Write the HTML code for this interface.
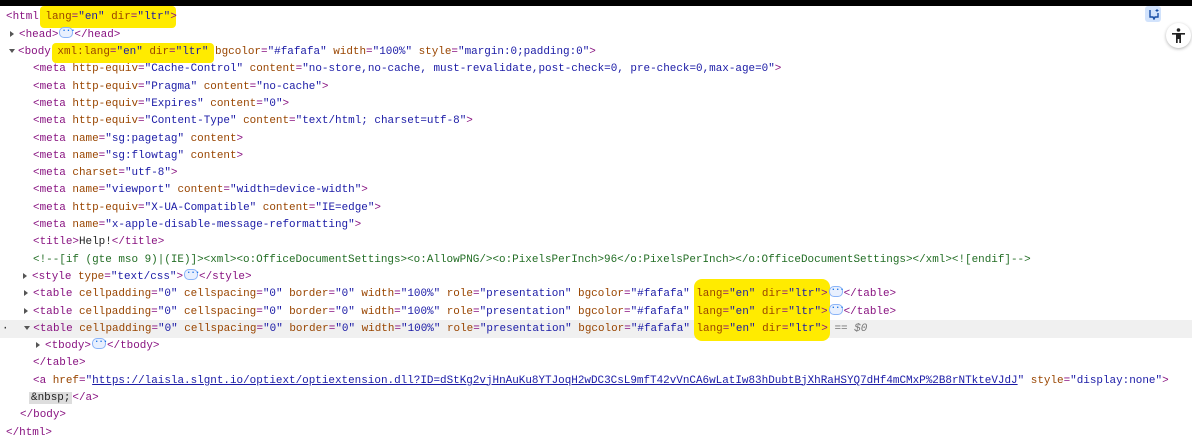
<!DOCTYPE html>
<html><head><style>
body{margin:0;width:1192px;height:438px;background:#fff;overflow:hidden;position:relative;font-family:"Liberation Mono",monospace;font-size:10.95px;}
.top{position:absolute;left:0;top:0;width:1192px;height:6px;background:#000;}
.l{position:absolute;left:0;height:17.3px;line-height:17.3px;white-space:pre;color:#222;}
.t{color:#881280}.n{color:#994500}.v{color:#1a1aa6}.c{color:#236e25}
.u{color:#1a1aa6;text-decoration:underline}
.hl{position:absolute;background:#ffeb00;border-radius:4px;}
.tri{display:inline-block;width:0;height:0;border-left:4px solid #555;border-top:3.5px solid transparent;border-bottom:3.5px solid transparent;margin:0 5px 0 2px;vertical-align:0px}
.trd{display:inline-block;width:0;height:0;border-top:4px solid #555;border-left:3.5px solid transparent;border-right:3.5px solid transparent;margin:0 3px 0 1px;vertical-align:1px}
.e{display:inline-block;width:12px;height:9px;border:1px solid #8ab4f8;border-radius:5px;background:#e8f0fe;vertical-align:-1px;margin:0 1px;position:relative}
.e:after{content:"···";position:absolute;left:1px;top:-5px;font-size:9px;color:#1a73e8;letter-spacing:-1px;font-weight:bold}
.sel{position:absolute;left:0;top:320px;width:1192px;height:18px;background:#f0f0f0}
</style></head><body>
<div class="top"></div>
<div class="sel"></div>
<div class="hl" style="left:40px;top:6px;width:136px;height:22px"></div>
<div class="hl" style="left:52px;top:43px;width:162px;height:20px"></div>
<div class="hl" style="left:694px;top:279px;width:136px;height:62px;border-radius:8px"></div>
<div style="position:absolute;left:1145px;top:6px;width:16px;height:16px;background:#d2e3fc;border-radius:3px"></div>
<svg style="position:absolute;left:1148px;top:8px" width="12" height="12"><path d="M2 2v7h3l1 2 1-2h3V5" fill="none" stroke="#174ea6" stroke-width="1.4"/><path d="M9 1v3M7.5 2.5h3" stroke="#174ea6" stroke-width="1"/></svg>
<div style="position:absolute;left:1166px;top:23px;width:25px;height:25px;border-radius:50%;background:#fff;box-shadow:0 1px 3px rgba(0,0,0,.3)"></div>
<svg style="position:absolute;left:1170px;top:27px" width="17" height="17"><circle cx="8.5" cy="3" r="1.8" fill="#222"/><path d="M2 6h13v1.6h-4V16H9.3v-4H7.7v4H6V7.6H2z" fill="#222"/></svg>

<div class="l" style="top:9.4px;padding-left:6px"><span class="t">&lt;html</span> <span class="n">lang</span><span class="t">=</span><span class="v">"en"</span> <span class="n">dir</span><span class="t">=</span><span class="v">"ltr"</span><span class="t">&gt;</span></div>
<div class="l" style="top:26.7px;padding-left:8px"><span class="tri"></span><span class="t">&lt;head&gt;</span><span class="e"></span><span class="t">&lt;/head&gt;</span></div>
<div class="l" style="top:44px;padding-left:8px"><span class="trd"></span><span class="t">&lt;body</span> <span class="n">xml:lang</span><span class="t">=</span><span class="v">"en"</span> <span class="n">dir</span><span class="t">=</span><span class="v">"ltr"</span> <span class="n">bgcolor</span><span class="t">=</span><span class="v">"#fafafa"</span> <span class="n">width</span><span class="t">=</span><span class="v">"100%"</span> <span class="n">style</span><span class="t">=</span><span class="v">"margin:0;padding:0"</span><span class="t">&gt;</span></div>
<div class="l" style="top:61.3px;padding-left:33px"><span class="t">&lt;meta</span> <span class="n">http-equiv</span><span class="t">=</span><span class="v">"Cache-Control"</span> <span class="n">content</span><span class="t">=</span><span class="v">"no-store,no-cache, must-revalidate,post-check=0, pre-check=0,max-age=0"</span><span class="t">&gt;</span></div>
<div class="l" style="top:78.6px;padding-left:33px"><span class="t">&lt;meta</span> <span class="n">http-equiv</span><span class="t">=</span><span class="v">"Pragma"</span> <span class="n">content</span><span class="t">=</span><span class="v">"no-cache"</span><span class="t">&gt;</span></div>
<div class="l" style="top:95.9px;padding-left:33px"><span class="t">&lt;meta</span> <span class="n">http-equiv</span><span class="t">=</span><span class="v">"Expires"</span> <span class="n">content</span><span class="t">=</span><span class="v">"0"</span><span class="t">&gt;</span></div>
<div class="l" style="top:113.2px;padding-left:33px"><span class="t">&lt;meta</span> <span class="n">http-equiv</span><span class="t">=</span><span class="v">"Content-Type"</span> <span class="n">content</span><span class="t">=</span><span class="v">"text/html; charset=utf-8"</span><span class="t">&gt;</span></div>
<div class="l" style="top:130.5px;padding-left:33px"><span class="t">&lt;meta</span> <span class="n">name</span><span class="t">=</span><span class="v">"sg:pagetag"</span> <span class="n">content</span><span class="t">&gt;</span></div>
<div class="l" style="top:147.8px;padding-left:33px"><span class="t">&lt;meta</span> <span class="n">name</span><span class="t">=</span><span class="v">"sg:flowtag"</span> <span class="n">content</span><span class="t">&gt;</span></div>
<div class="l" style="top:165.1px;padding-left:33px"><span class="t">&lt;meta</span> <span class="n">charset</span><span class="t">=</span><span class="v">"utf-8"</span><span class="t">&gt;</span></div>
<div class="l" style="top:182.4px;padding-left:33px"><span class="t">&lt;meta</span> <span class="n">name</span><span class="t">=</span><span class="v">"viewport"</span> <span class="n">content</span><span class="t">=</span><span class="v">"width=device-width"</span><span class="t">&gt;</span></div>
<div class="l" style="top:199.7px;padding-left:33px"><span class="t">&lt;meta</span> <span class="n">http-equiv</span><span class="t">=</span><span class="v">"X-UA-Compatible"</span> <span class="n">content</span><span class="t">=</span><span class="v">"IE=edge"</span><span class="t">&gt;</span></div>
<div class="l" style="top:217px;padding-left:33px"><span class="t">&lt;meta</span> <span class="n">name</span><span class="t">=</span><span class="v">"x-apple-disable-message-reformatting"</span><span class="t">&gt;</span></div>
<div class="l" style="top:234.3px;padding-left:33px"><span class="t">&lt;title&gt;</span>Help!<span class="t">&lt;/title&gt;</span></div>
<div class="l" style="top:251.6px;padding-left:33px"><span class="c">&lt;!--[if (gte mso 9)|(IE)]&gt;&lt;xml&gt;&lt;o:OfficeDocumentSettings&gt;&lt;o:AllowPNG/&gt;&lt;o:PixelsPerInch&gt;96&lt;/o:PixelsPerInch&gt;&lt;/o:OfficeDocumentSettings&gt;&lt;/xml&gt;&lt;![endif]--&gt;</span></div>
<div class="l" style="top:268.9px;padding-left:21px"><span class="tri"></span><span class="t">&lt;style</span> <span class="n">type</span><span class="t">=</span><span class="v">"text/css"</span><span class="t">&gt;</span><span class="e"></span><span class="t">&lt;/style&gt;</span></div>
<div class="l" style="top:286.2px;padding-left:22px"><span class="tri"></span><span class="t">&lt;table</span> <span class="n">cellpadding</span><span class="t">=</span><span class="v">"0"</span> <span class="n">cellspacing</span><span class="t">=</span><span class="v">"0"</span> <span class="n">border</span><span class="t">=</span><span class="v">"0"</span> <span class="n">width</span><span class="t">=</span><span class="v">"100%"</span> <span class="n">role</span><span class="t">=</span><span class="v">"presentation"</span> <span class="n">bgcolor</span><span class="t">=</span><span class="v">"#fafafa"</span> <span class="n">lang</span><span class="t">=</span><span class="v">"en"</span> <span class="n">dir</span><span class="t">=</span><span class="v">"ltr"</span><span class="t">&gt;</span><span class="e"></span><span class="t">&lt;/table&gt;</span></div>
<div class="l" style="top:303.5px;padding-left:22px"><span class="tri"></span><span class="t">&lt;table</span> <span class="n">cellpadding</span><span class="t">=</span><span class="v">"0"</span> <span class="n">cellspacing</span><span class="t">=</span><span class="v">"0"</span> <span class="n">border</span><span class="t">=</span><span class="v">"0"</span> <span class="n">width</span><span class="t">=</span><span class="v">"100%"</span> <span class="n">role</span><span class="t">=</span><span class="v">"presentation"</span> <span class="n">bgcolor</span><span class="t">=</span><span class="v">"#fafafa"</span> <span class="n">lang</span><span class="t">=</span><span class="v">"en"</span> <span class="n">dir</span><span class="t">=</span><span class="v">"ltr"</span><span class="t">&gt;</span><span class="e"></span><span class="t">&lt;/table&gt;</span></div>
<div class="l" style="top:320.8px;padding-left:2px">·   <span class="trd" style="margin-left:-4px"></span><span class="t">&lt;table</span> <span class="n">cellpadding</span><span class="t">=</span><span class="v">"0"</span> <span class="n">cellspacing</span><span class="t">=</span><span class="v">"0"</span> <span class="n">border</span><span class="t">=</span><span class="v">"0"</span> <span class="n">width</span><span class="t">=</span><span class="v">"100%"</span> <span class="n">role</span><span class="t">=</span><span class="v">"presentation"</span> <span class="n">bgcolor</span><span class="t">=</span><span class="v">"#fafafa"</span> <span class="n">lang</span><span class="t">=</span><span class="v">"en"</span> <span class="n">dir</span><span class="t">=</span><span class="v">"ltr"</span><span class="t">&gt;</span> <i style="color:#777">== $0</i></div>
<div class="l" style="top:338.1px;padding-left:34px"><span class="tri"></span><span class="t">&lt;tbody&gt;</span><span class="e"></span><span class="t">&lt;/tbody&gt;</span></div>
<div class="l" style="top:355.4px;padding-left:33px"><span class="t">&lt;/table&gt;</span></div>
<div class="l" style="top:372.7px;padding-left:33px"><span class="t">&lt;a</span> <span class="n">href</span><span class="t">=</span><span class="v">"</span><span class="u">https://laisla.slgnt.io/optiext/optiextension.dll?ID=dStKg2vjHnAuKu8YTJoqH2wDC3CsL9mfT42vVnCA6wLatIw83hDubtBjXhRaHSYQ7dHf4mCMxP%2B8rNTkteVJdJ</span><span class="v">"</span> <span class="n">style</span><span class="t">=</span><span class="v">"display:none"</span><span class="t">&gt;</span></div>
<div class="l" style="top:390px;padding-left:29px"><span style="background:#ddd;padding:0 2px">&amp;nbsp;</span><span class="t">&lt;/a&gt;</span></div>
<div class="l" style="top:407.3px;padding-left:20px"><span class="t">&lt;/body&gt;</span></div>
<div class="l" style="top:424.6px;padding-left:6px"><span class="t">&lt;/html&gt;</span></div>
</body></html>
